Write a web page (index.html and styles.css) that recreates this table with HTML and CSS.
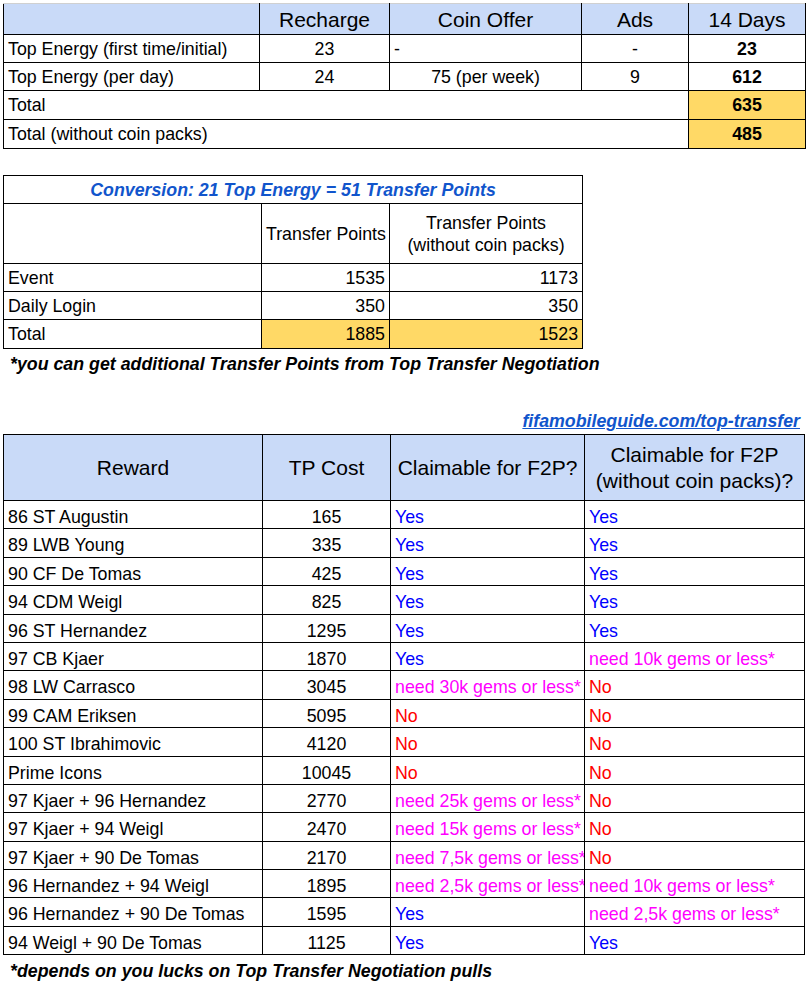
FILE: index.html
```html
<!DOCTYPE html>
<html>
<head>
<meta charset="utf-8">
<link rel="stylesheet" href="styles.css">
</head>
<body>
<div class="page">
  <table class="grid t1">
    <colgroup><col style="width:256px"><col style="width:130px"><col style="width:192px"><col style="width:107px"><col style="width:117px"></colgroup>
    <tr class="hdr t1-hdr">
      <td></td><td class="c">Recharge</td><td class="c">Coin Offer</td><td class="c">Ads</td><td class="c">14 Days</td>
    </tr>
    <tr class="r">
      <td>Top Energy (first time/initial)</td><td class="c">23</td><td>-</td><td class="c">-</td><td class="c b">23</td>
    </tr>
    <tr class="r">
      <td>Top Energy (per day)</td><td class="c">24</td><td class="c">75 (per week)</td><td class="c">9</td><td class="c b">612</td>
    </tr>
    <tr class="r r29">
      <td colspan="4">Total</td><td class="c b y">635</td>
    </tr>
    <tr class="r r29">
      <td colspan="4">Total (without coin packs)</td><td class="c b y">485</td>
    </tr>
  </table>

  <table class="grid t2">
    <colgroup><col style="width:258px"><col style="width:128px"><col style="width:193px"></colgroup>
    <tr class="r">
      <td colspan="3" class="c title">Conversion: 21 Top Energy = 51 Transfer Points</td>
    </tr>
    <tr class="t2-hdr">
      <td></td><td class="c">Transfer Points</td><td class="c">Transfer Points<br>(without coin packs)</td>
    </tr>
    <tr class="r"><td>Event</td><td class="rt">1535</td><td class="rt">1173</td></tr>
    <tr class="r"><td>Daily Login</td><td class="rt">350</td><td class="rt">350</td></tr>
    <tr class="r r29"><td>Total</td><td class="rt y">1885</td><td class="rt y">1523</td></tr>
  </table>
  <p class="note note1">*you can get additional Transfer Points from Top Transfer Negotiation</p>

  <p class="link"><a href="#">fifamobileguide.com/top-transfer</a></p>

  <table class="grid t3">
    <colgroup><col style="width:259px"><col style="width:128px"><col style="width:194px"><col style="width:220px"></colgroup>
    <tr class="hdr t3-hdr">
      <td class="c">Reward</td><td class="c">TP Cost</td><td class="c">Claimable for F2P?</td><td class="c">Claimable for F2P<br>(without coin packs)?</td>
    </tr>
    <tr class="d"><td>86 ST Augustin</td><td class="c">165</td><td class="yes">Yes</td><td class="yes">Yes</td></tr>
    <tr class="d"><td>89 LWB Young</td><td class="c">335</td><td class="yes">Yes</td><td class="yes">Yes</td></tr>
    <tr class="d"><td>90 CF De Tomas</td><td class="c">425</td><td class="yes">Yes</td><td class="yes">Yes</td></tr>
    <tr class="d"><td>94 CDM Weigl</td><td class="c">825</td><td class="yes">Yes</td><td class="yes">Yes</td></tr>
    <tr class="d"><td>96 ST Hernandez</td><td class="c">1295</td><td class="yes">Yes</td><td class="yes">Yes</td></tr>
    <tr class="d"><td>97 CB Kjaer</td><td class="c">1870</td><td class="yes">Yes</td><td class="need">need 10k gems or less*</td></tr>
    <tr class="d"><td>98 LW Carrasco</td><td class="c">3045</td><td class="need">need 30k gems or less*</td><td class="no">No</td></tr>
    <tr class="d"><td>99 CAM Eriksen</td><td class="c">5095</td><td class="no">No</td><td class="no">No</td></tr>
    <tr class="d"><td>100 ST Ibrahimovic</td><td class="c">4120</td><td class="no">No</td><td class="no">No</td></tr>
    <tr class="d"><td>Prime Icons</td><td class="c">10045</td><td class="no">No</td><td class="no">No</td></tr>
    <tr class="d"><td>97 Kjaer + 96 Hernandez</td><td class="c">2770</td><td class="need">need 25k gems or less*</td><td class="no">No</td></tr>
    <tr class="d"><td>97 Kjaer + 94 Weigl</td><td class="c">2470</td><td class="need">need 15k gems or less*</td><td class="no">No</td></tr>
    <tr class="d"><td>97 Kjaer + 90 De Tomas</td><td class="c">2170</td><td class="need">need 7,5k gems or less*</td><td class="no">No</td></tr>
    <tr class="d"><td>96 Hernandez + 94 Weigl</td><td class="c">1895</td><td class="need">need 2,5k gems or less*</td><td class="need">need 10k gems or less*</td></tr>
    <tr class="d"><td>96 Hernandez + 90 De Tomas</td><td class="c">1595</td><td class="yes">Yes</td><td class="need">need 2,5k gems or less*</td></tr>
    <tr class="d"><td>94 Weigl + 90 De Tomas</td><td class="c">1125</td><td class="yes">Yes</td><td class="yes">Yes</td></tr>
  </table>
  <p class="note note2">*depends on you lucks on Top Transfer Negotiation pulls</p>
</div>
</body>
</html>
```

FILE: styles.css
```css
html, body {
  margin: 0;
  padding: 0;
  background: #ffffff;
}

body {
  font-family: "Liberation Sans", Arial, sans-serif;
  font-size: 17.8px;
  color: #000000;
}

.page {
  padding: 3px 0 0 3px;
  display: flex;
  flex-direction: column;
  align-items: flex-start;
}

.grid {
  border-collapse: collapse;
  table-layout: fixed;
}

.grid td {
  border: 1px solid #000000;
  padding: 2px 4px 0 4px;
  line-height: 1.2;
  white-space: nowrap;
  overflow: hidden;
  text-overflow: clip;
  vertical-align: middle;
}

.t1 {
  width: 802px;
}

.t1 .t1-hdr td {
  border-top-color: #d0d0d0;
}

.hdr td {
  background: #c9daf8;
  font-size: 21px;
}

.t1-hdr {
  height: 31px;
}

.r {
  height: 28px;
}

.r29 {
  height: 29px;
}

.c {
  text-align: center;
}

.rt {
  text-align: right;
}

.b {
  font-weight: bold;
}

.y {
  background: #ffd966;
}

.t2 {
  width: 579px;
  margin-top: 26px;
}

.title {
  color: #1155cc;
  font-weight: bold;
  font-style: italic;
}

.t2-hdr {
  height: 60px;
}

.note {
  margin: 0;
  font-weight: bold;
  font-style: italic;
  line-height: 21px;
  padding-left: 7px;
}

.note1 {
  margin-top: 5px;
}

.link {
  margin: 36px 0 0 0;
  width: 797px;
  text-align: right;
  line-height: 21px;
  font-weight: bold;
  font-style: italic;
}

.link a {
  color: #1155cc;
  text-decoration: underline;
}

.t3 {
  width: 801px;
  margin-top: 2px;
}

.t3-hdr {
  height: 66px;
}

.t3-hdr td {
  line-height: 26px;
  padding-top: 0;
}

.d {
  height: 28.4px;
}

.d td {
  padding-top: 6px;
}

.yes {
  color: #0000ff;
}

.no {
  color: #ff0000;
}

.need {
  color: #ff00ff;
}

.note2 {
  margin-top: 6px;
}
```
